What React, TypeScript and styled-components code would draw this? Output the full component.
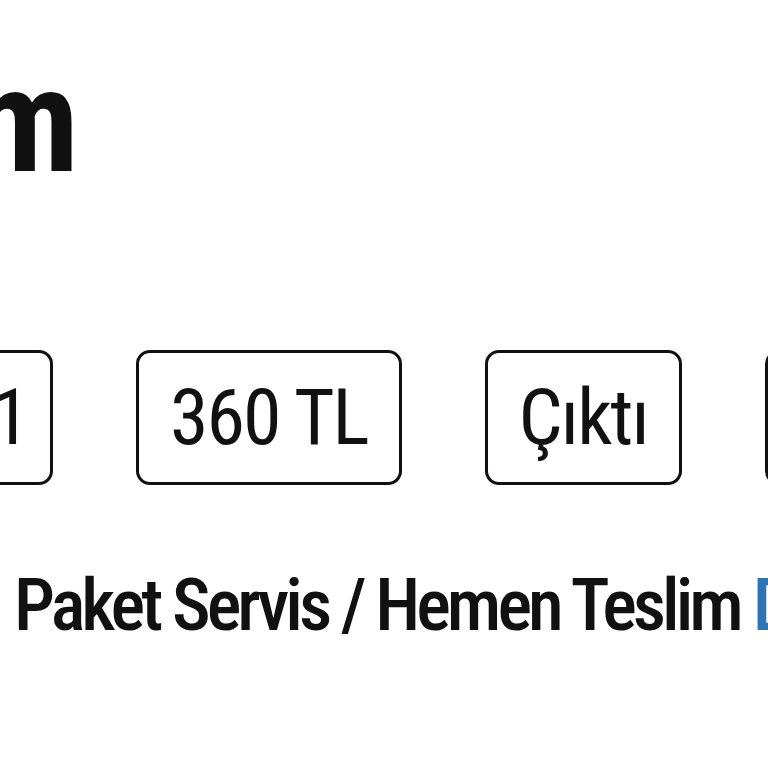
import React from 'react';
import styled, { createGlobalStyle } from 'styled-components';

const Global = createGlobalStyle`
  body {
    margin: 0;
    background: #fff;
    font-family: 'Roboto Condensed', Roboto, 'Liberation Sans', sans-serif;
    color: #111;
  }
`;

const Page = styled.div`
  width: 768px;
  height: 768px;
  overflow: hidden;
  display: flex;
  flex-direction: column;
`;

// the view is a close crop, so the start of the title runs off the left edge
const TitleSlot = styled.div`
  width: 76px;
  display: flex;
  justify-content: flex-end;
  margin-top: 49px;
`;

const Title = styled.h1`
  margin: 0;
  font-size: 146px;
  line-height: 1;
  font-weight: 700;
  white-space: nowrap;
  letter-spacing: -3px;
`;

const TagRow = styled.div`
  display: flex;
  gap: 83px;
  margin-top: 155px;
`;

const LeadSlot = styled.div`
  width: 53px;
  flex-shrink: 0;
  display: flex;
  justify-content: flex-end;
`;

const Tag = styled.div<{ $tightEnd?: boolean }>`
  flex-shrink: 0;
  box-sizing: border-box;
  height: 135px;
  padding: 0 ${(p) => (p.$tightEnd ? '22px' : '31px')} 0 31px;
  display: flex;
  align-items: center;
  border: 3px solid #111;
  border-radius: 14px;
  font-size: 78px;
  font-weight: 400;
  letter-spacing: -2px;
  white-space: nowrap;
`;

const Delivery = styled.p`
  margin: 84px 0 0 14px;
  font-size: 73px;
  line-height: 1;
  font-weight: 500;
  letter-spacing: -4px;
  white-space: nowrap;
`;

const Link = styled.span`
  color: #2f74b5;
`;

export default function App() {
  return (
    <>
      <Global />
      <Page>
        <TitleSlot>
          <Title>Siparişim</Title>
        </TitleSlot>
        <TagRow>
          <LeadSlot>
            <Tag $tightEnd>Masa 1</Tag>
          </LeadSlot>
          <Tag>360 TL</Tag>
          <Tag>Çıktı</Tag>
          <Tag>Yazdır</Tag>
        </TagRow>
        <Delivery>
          Paket Servis / Hemen Teslim <Link>Değiştir</Link>
        </Delivery>
      </Page>
    </>
  );
}
